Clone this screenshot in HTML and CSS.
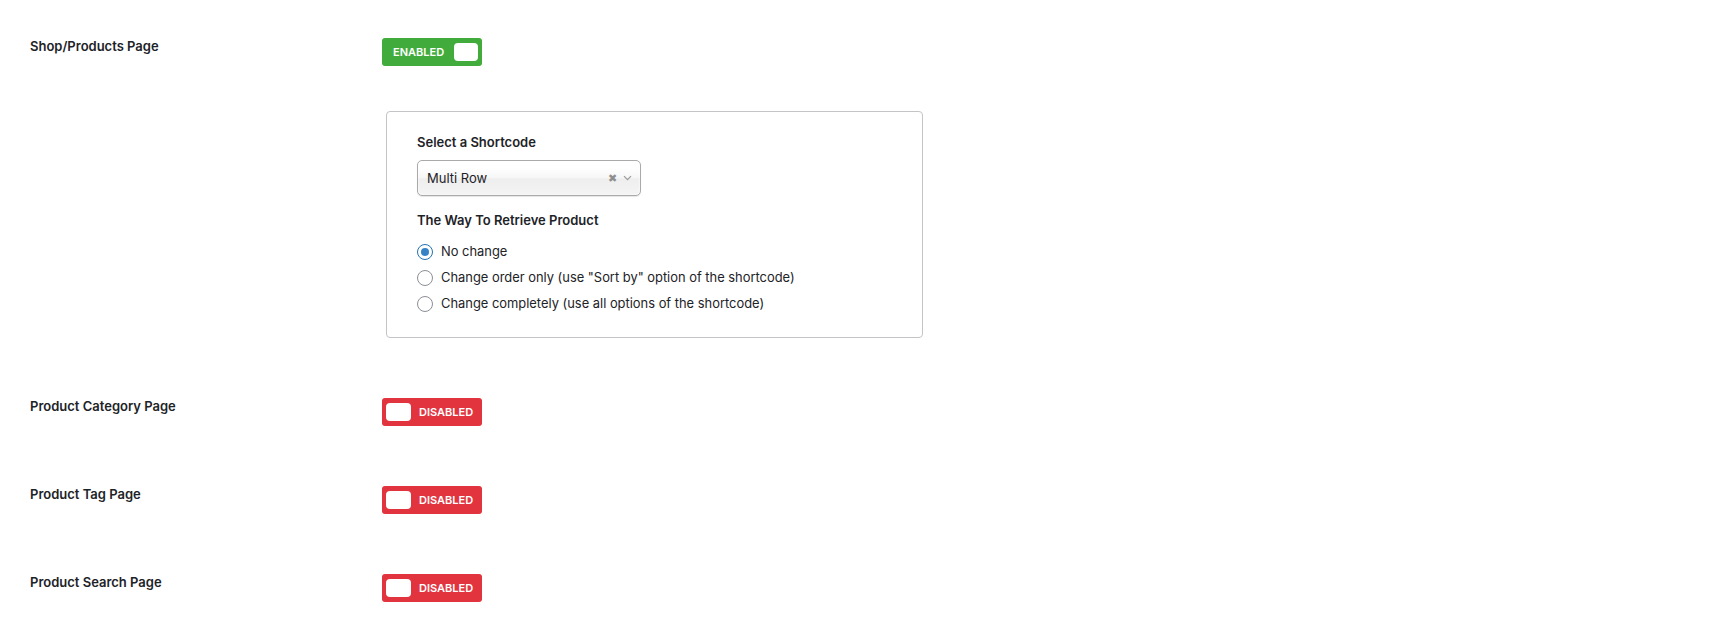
FILE: index.html
```html
<!DOCTYPE html>
<html lang="en">
<head>
<meta charset="utf-8">
<title>Shop Pages</title>
<link rel="stylesheet" href="styles.css">
</head>
<body>
<div class="settings">
	<div class="row">
		<div class="label">Shop/Products Page</div>
		<div class="field">
			<span class="toggle on"><b>ENABLED</b><i></i></span>
			<div class="card">
				<div class="title">Select a Shortcode</div>
				<div class="select">
					<span class="value">Multi Row</span>
					<span class="clear">&#10006;</span>
					<svg class="chev" width="9" height="6" viewBox="0 0 9 6"><path d="M1 1.2l3.5 3.5L8 1.2" fill="none" stroke="#999" stroke-width="1.2"/></svg>
				</div>
				<div class="title way">The Way To Retrieve Product</div>
				<label class="radio"><input type="radio" name="way" checked><i></i> No change</label>
				<label class="radio"><input type="radio" name="way"><i></i> Change order only (use "Sort by" option of the shortcode)</label>
				<label class="radio"><input type="radio" name="way"><i></i> Change completely (use all options of the shortcode)</label>
			</div>
		</div>
	</div>
	<div class="row">
		<div class="label">Product Category Page</div>
		<div class="field"><span class="toggle off"><i></i><b>DISABLED</b></span></div>
	</div>
	<div class="row">
		<div class="label">Product Tag Page</div>
		<div class="field"><span class="toggle off"><i></i><b>DISABLED</b></span></div>
	</div>
	<div class="row">
		<div class="label">Product Search Page</div>
		<div class="field"><span class="toggle off"><i></i><b>DISABLED</b></span></div>
	</div>
</div>
</body>
</html>
```
FILE: styles.css
```css
*{box-sizing: border-box;}
body{
	margin: 0;
	padding: 38px 30px;
	background: #fff;
	color: #1d2327;
	font-family: 'Inter', 'Liberation Sans', sans-serif;
	font-size: 13px;
	line-height: 18px;
}
.settings{
	display: flex;
	flex-direction: column;
	gap: 60px;
}
.row{
	display: grid;
	grid-template-columns: 352px auto;
}
.label{
	font-weight: 600;
	margin-top: -1px;
}

.toggle{
	display: flex;
	align-items: center;
	width: 100px;
	height: 28px;
	padding: 0 4px;
	border-radius: 3px;
	color: #fff;
}
.toggle b{
	font-size: 11px;
	font-weight: 600;
}
.toggle i{
	display: block;
	width: 25px;
	height: 18px;
	border-radius: 4px;
	background: #fff;
}
.toggle.on{
	background: #41ac3b;
	padding-left: 11px;
	gap: 10px;
}
.toggle.off{
	background: #e2343f;
	gap: 8px;
}

.card{
	width: 537px;
	margin: 45px 0 0 4px;
	padding: 21px 30px 20px;
	border: 1px solid #c3c4c7;
	border-radius: 4px;
}
.title{
	font-weight: 600;
}
.title.way{
	margin: 15px 0 10px;
}
.select{
	display: flex;
	align-items: center;
	width: 224px;
	height: 36px;
	margin-top: 9px;
	padding: 0 8px 0 9px;
	border: 1px solid #aaa;
	border-radius: 5px;
	background: linear-gradient(#fff 20%, #f6f6f6 50%, #eee 52%, #f4f4f4 100%);
	box-shadow: 0 0 3px #fff inset, 0 1px 1px rgba(0,0,0,.1);
}
.select .value{ flex: 1;}
.select .clear{
	font-size: 11px;
	color: #8f8f8f;
	margin-right: 6px;
}
.radio{
	display: flex;
	align-items: center;
	height: 26px;
	gap: 8px;
	font-size: 12.9px;
	cursor: pointer;
}
	.radio input{
		position: absolute;
		opacity: 0;
	}
	.radio i{
		display: flex;
		align-items: center;
		justify-content: center;
		width: 16px;
		height: 16px;
		border: 1px solid #8c8f94;
		border-radius: 50%;
		background: #fff;
	}
	.radio input:checked + i{
		border-color: #2271b1;
	}
	.radio input:checked + i::before{
		content: '';
		width: 8px;
		height: 8px;
		border-radius: 50%;
		background: #3582c4;
	}
```
